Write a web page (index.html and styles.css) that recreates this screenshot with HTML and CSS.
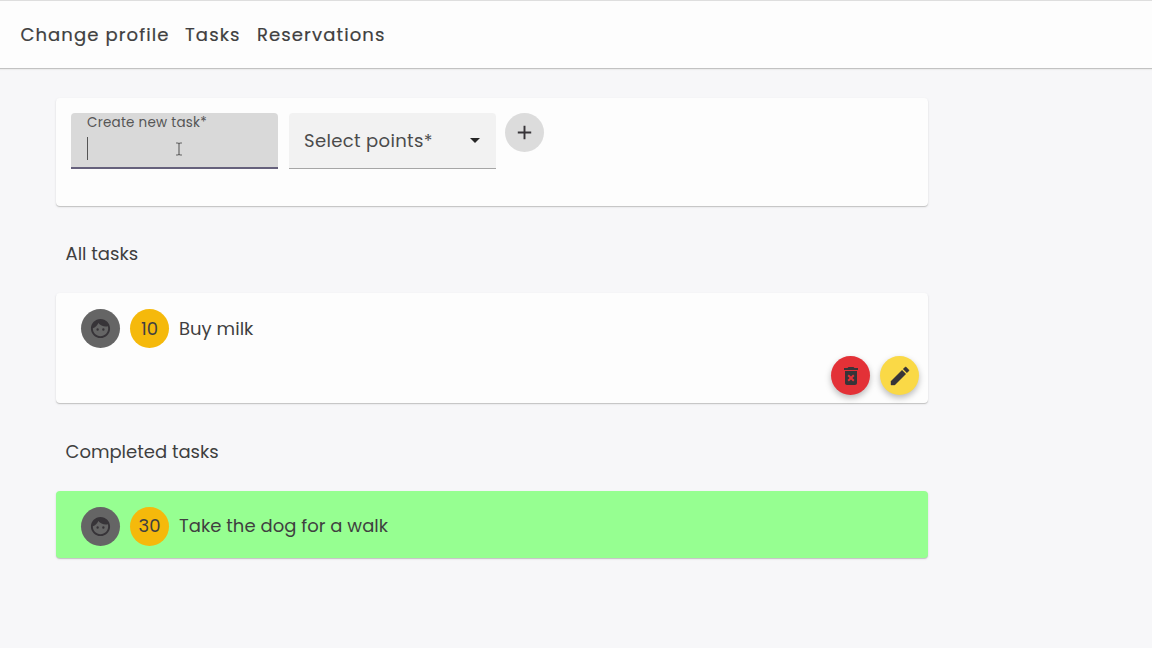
FILE: index.html
```html
<!DOCTYPE html>
<html lang="en">
<head>
<meta charset="utf-8">
<title>Tasks</title>
<link rel="stylesheet" href="styles.css">
</head>
<body>
<svg class="defs" width="0" height="0">
  <symbol id="face" viewBox="0 0 24 24"><path d="M10.25 13a1.25 1.25 0 1 1-2.5 0 1.25 1.25 0 0 1 2.5 0zM15 11.75a1.25 1.25 0 1 0 0 2.5 1.25 1.25 0 0 0 0-2.500zM22 12c0 5.520-4.480 10-10 10S2 17.520 2 12 6.480 2 12 2s10 4.480 10 10zm-2 0c0-.780-.120-1.530-.330-2.240-.700.150-1.420.240-2.170.240-3.130 0-5.920-1.440-7.760-3.690C8.690 8.870 6.600 10.880 4 11.860c.010.040 0 .090 0 .140 0 4.410 3.590 8 8 8s8-3.590 8-8z"/></symbol>
</svg>
<header class="topbar">
  <nav class="nav">
    <a class="nav-profile">Change profile</a>
    <a class="nav-tasks">Tasks</a>
    <a class="nav-reservations">Reservations</a>
  </nav>
</header>
<main class="page">
  <form class="card create">
    <div class="field active">
      <label class="field-label">Create new task*</label>
      <span class="caret"></span>
      <svg class="pointer" width="8" height="14" viewBox="0 0 8 14"><path d="M1 1h2l1 1 1-1h2M4 2v10M1 13h2l1-1 1 1h2"/></svg>
    </div>
    <div class="field select">
      <span class="select-label">Select points*</span>
      <svg class="arrow" width="10" height="5" viewBox="0 0 10 5"><path d="M0 0h10L5 5z"/></svg>
    </div>
    <button class="circle add" type="button" aria-label="Add"><svg width="24" height="24" viewBox="0 0 24 24"><path d="M19 13h-6v6h-2v-6H5v-2h6V5h2v6h6v2z"/></svg></button>
  </form>
  <h2 class="heading all">All tasks</h2>
  <section class="card task">
    <div class="row">
      <span class="circle avatar"><svg width="23" height="23"><use href="#face"/></svg></span>
      <span class="circle points">10</span>
      <span class="task-name">Buy milk</span>
    </div>
    <div class="actions">
      <button class="circle fab delete" type="button" aria-label="Delete"><svg width="24" height="24" viewBox="0 0 24 24"><path fill-rule="evenodd" d="M6 19c0 1.100.9 2 2 2h8c1.100 0 2-.9 2-2V7H6v12zm2.460-7.120 1.410-1.410L12 12.590l2.120-2.120 1.410 1.410L13.410 14l2.120 2.120-1.410 1.410L12 15.410l-2.120 2.120-1.410-1.410L10.590 14l-2.130-2.120zM15.500 4l-1-1h-5l-1 1H5v2h14V4z"/></svg></button>
      <button class="circle fab edit" type="button" aria-label="Edit"><svg width="24" height="24" viewBox="0 0 24 24"><path d="M3 17.250V21h3.750L17.810 9.940l-3.750-3.750L3 17.250zM20.710 7.040a1 1 0 0 0 0-1.410l-2.340-2.340a1 1 0 0 0-1.410 0l-1.830 1.830 3.750 3.750 1.830-1.830z"/></svg></button>
    </div>
  </section>
  <h2 class="heading completed">Completed tasks</h2>
  <section class="card done">
    <div class="row">
      <span class="circle avatar"><svg width="23" height="23"><use href="#face"/></svg></span>
      <span class="circle points">30</span>
      <span class="task-name">Take the dog for a walk</span>
    </div>
  </section>
</main>
</body>
</html>
```
FILE: styles.css
```css
* { box-sizing: border-box; }
body {
  margin: 0;
  height: 648px;
  overflow: hidden;
  background: #f7f7f9;
  color: #403f40;
  font-family: Poppins, Inter, "Open Sans", sans-serif;
  font-size: 18px;
}
.defs { display: block; }
.topbar {
  height: 69px;
  padding: 0 20px;
  background: #fdfdfd;
  border-top: 1px solid #dedede;
  border-bottom: 1px solid #c2c2c2;
  box-shadow: 0 1px 1px #ececec;
}
.nav { display: flex; align-items: center; height: 66px; padding-left: .4px; letter-spacing: 1.12px; white-space: nowrap; -webkit-text-stroke: .2px #403f40; }
.nav-profile { width: 164.6px; }
.nav-tasks { width: 72px; }
.page { width: 872px; margin: 29px 0 0 56px; }
.card {
  background: #fdfdfd;
  border-radius: 4px;
  box-shadow: 0 1px 1px #c2c2c2, 0 1px 3px #e9e9eb;
}
.create { display: flex; align-items: flex-start; height: 108px; padding: 15px; }
.field {
  position: relative;
  width: 207px;
  height: 56px;
  padding-left: 15px;
  border-radius: 4px 4px 0 0;
}
.active { margin-right: 11px; background: #d9d9d9; border-bottom: 2px solid #66617c; }
.field-label { display: block; padding: 1px 0 0 1px; font-size: 13.5px; line-height: 17px; letter-spacing: .25px; color: #565656; }
.caret { display: block; width: 1px; height: 23px; margin: 6px 0 0 1px; background: #555; }
.pointer { position: absolute; left: 104px; top: 29px; fill: none; stroke: #666; stroke-width: 1.2; }
.select {
  display: flex;
  align-items: center;
  justify-content: space-between;
  margin-right: 9px;
  padding-right: 16px;
  background: #f2f2f2;
  border-bottom: 1px solid #a6a6a6;
}
.select-label { color: #4b4b4b; letter-spacing: .35px; white-space: nowrap; }
.arrow { fill: #262626; }
.circle {
  display: flex;
  align-items: center;
  justify-content: center;
  flex: none;
  width: 39px;
  height: 39px;
  padding: 0;
  border: 0;
  border-radius: 50%;
  fill: #373438;
}
.add { background: #dcdcdc; }
.add svg { width: 23px; height: 23px; }
.heading { margin: 0; padding-left: 9.5px; font-size: 18px; font-weight: 400; line-height: 28px; }
.all { margin-top: 34px; }
.completed { margin-top: 35px; }
.task { height: 110px; margin-top: 25px; padding: 16px 9px 0 25px; }
.row { display: flex; align-items: center; gap: 10px; height: 39px; }
.avatar { background: #656565; }
.points { background: #f5b90b; }
.task-name { white-space: nowrap; letter-spacing: .03px; }
.actions { display: flex; justify-content: flex-end; gap: 10px; margin-top: 8px; }
.fab { box-shadow: 0 3px 6px #0004; }
.fab svg { width: 24px; height: 24px; }
.edit path { stroke: #373438; stroke-width: .4; }
.delete { background: #e33137; }
.edit { background: #fad946; }
.done { height: 67px; margin-top: 25px; padding: 16px 25px; background: #96ff91; }
.done .task-name, .done .points { padding-bottom: 2px; }
```
